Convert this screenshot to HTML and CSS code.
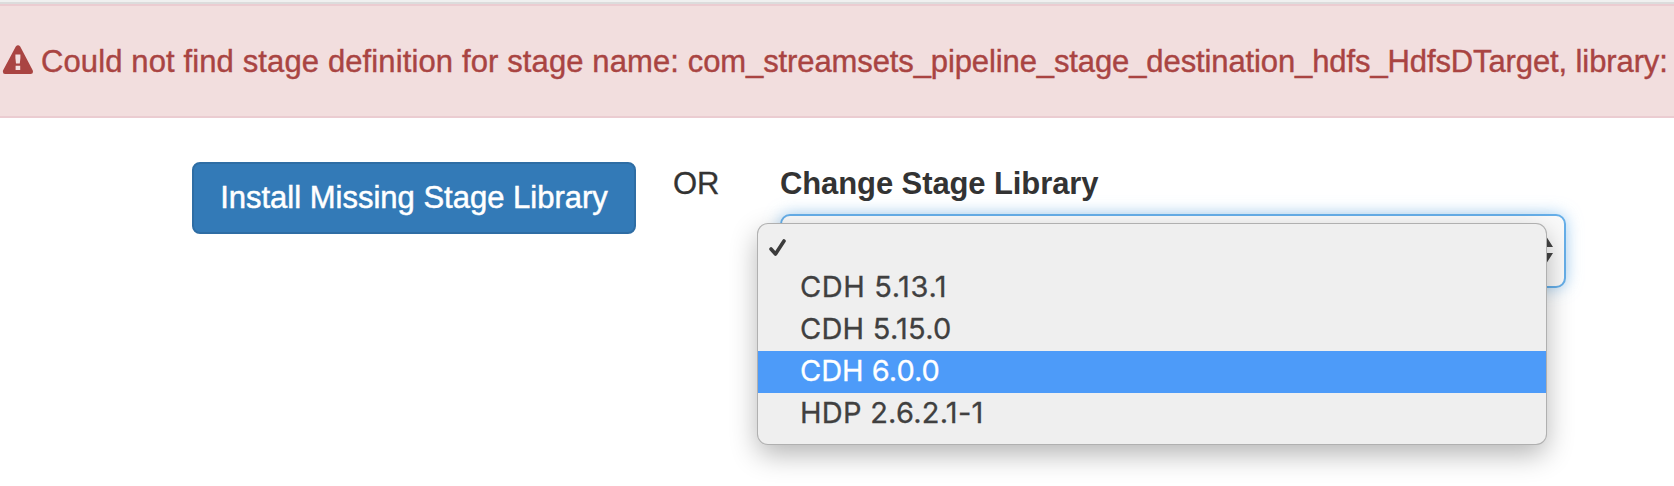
FILE: index.html
```html
<!DOCTYPE html>
<html lang="en">
<head>
<meta charset="utf-8">
<title>Stage Library</title>
<link rel="stylesheet" href="styles.css">
</head>
<body>
<div class="topline"></div>
<div class="alert" role="alert">
  <svg class="alert-icon" viewBox="0 0 32 30"><path fill-rule="evenodd" d="M13.8 1.6Q16 -1 18.2 1.6L30.8 25.6Q31.6 29 28.6 29H3Q.4 29 1 25.6ZM13.4 9.5V13L14 18.5H17.8L18.4 13V9.5ZM13.6 20.8V25H18.2V20.8Z"/></svg>
  <span class="alert-text"><span class="message">Could not find stage definition for stage name: </span><span class="stage-name">com_streamsets_pipeline_stage_destination_hdfs_HdfsDTarget, library:</span></span>
</div>
<main class="actions">
  <button class="install" type="button">Install Missing Stage Library</button>
  <span class="or">OR</span>
  <div class="field">
    <div class="label">Change Stage Library</div>
    <div class="select">
      <svg class="arrows" viewBox="0 0 14 28"><path d="M7 0L14 11H0ZM0 17H14L7 28Z"/></svg>
      <ul class="menu">
        <li class="option blank"><svg class="check" viewBox="0 0 20 20"><path d="M3 11L7.5 16L16 3"/></svg></li>
        <li class="option wide">CDH 5.13.1</li>
        <li class="option">CDH 5.15.0</li>
        <li class="option active">CDH 6.0.0</li>
        <li class="option">HDP 2.6.2.1-1</li>
      </ul>
    </div>
  </div>
</main>
</body>
</html>
```
FILE: styles.css
```css
* { box-sizing: border-box; }
body {
  margin: 0;
  height: 486px;
  overflow: hidden;
  background: #fff;
  color: #333;
  font-family: "Liberation Sans", Arial, sans-serif;
  font-size: 31px;
}
.topline {
  height: 4px;
  background: #f0f0f0;
  border-bottom: 2px solid #dcdcdc;
}
.alert {
  display: flex;
  align-items: center;
  height: 114px;
  padding: 0 0 2px 2px;
  border: solid #ebccd1;
  border-width: 2px 0;
  background: #f2dede;
  color: #a94442;
  white-space: nowrap;
}
.alert-icon {
  flex: none;
  width: 32px;
  height: 30px;
  margin-right: 7px;
  fill: #a94442;
}
.alert-text { padding-top: 4px; -webkit-text-stroke: .4px currentColor; }
.message { letter-spacing: .12px; }
.stage-name { letter-spacing: -.11px; }
.actions {
  display: flex;
  align-items: flex-start;
  padding: 44px 0 0 192px;
}
.install {
  width: 444px;
  height: 72px;
  padding: 0;
  border: 2px solid #2e6da4;
  border-radius: 8px;
  background: #337ab7;
  color: #fff;
  font: inherit;
  white-space: nowrap;
  -webkit-text-stroke: .5px currentColor;
}
.or { margin-left: 37px; line-height: 43px; width: 45px; -webkit-text-stroke: .3px currentColor; }
.field { margin-left: 62px; width: 786px; }
.label { font-weight: bold; line-height: 43px; height: 52px; letter-spacing: -.1px; white-space: nowrap; }
.select {
  position: relative;
  display: flex;
  align-items: center;
  justify-content: flex-end;
  height: 74px;
  padding: 0 11px 2px 0;
  border: 2px solid #66afe9;
  border-radius: 10px;
  background: #fafafa;
  box-shadow: 0 0 16px rgba(102, 175, 233, .6);
}
.arrows { width: 14px; height: 28px; overflow: visible; fill: #444; }
.menu {
  position: absolute;
  top: 8px;
  left: -24px;
  width: 788px;
  height: 220px;
  margin: 0;
  padding: 2px 0 0;
  list-style: none;
  border-radius: 10px;
  background: #efefef;
  box-shadow: 0 0 0 1px #b0b0b0, 0 10px 28px rgba(0, 0, 0, .3);
  font-family: Inter, "Noto Sans", sans-serif;
  font-size: 29px;
  color: #404040;
  -webkit-text-stroke: .3px currentColor;
}
.option { height: 42px; padding-left: 42px; line-height: 40px; letter-spacing: .25px; white-space: nowrap; }
.option.wide { letter-spacing: .6px; }
.option.blank { height: 41px; padding: 12px 0 0 10px; line-height: 0; }
.option.active { background: #4d9bf9; color: #fff; letter-spacing: 0; }
.check {
  width: 20px;
  height: 20px;
  fill: none;
  stroke: #3c3c3c;
  stroke-width: 3.6;
  stroke-linecap: round;
  stroke-linejoin: round;
}
```
